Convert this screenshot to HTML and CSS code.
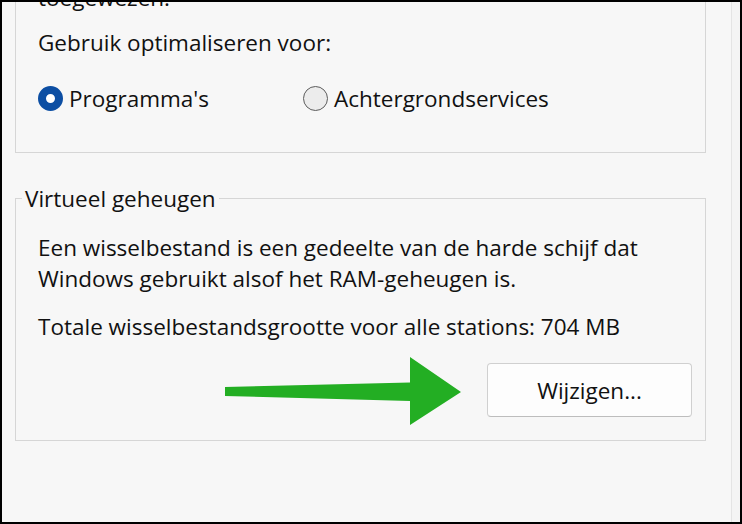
FILE: index.html
```html
<!DOCTYPE html>
<html lang="nl">
<head>
<meta charset="utf-8">
<title>Prestatieopties</title>
<link rel="stylesheet" href="styles.css">
</head>
<body>
<div class="frame">
  <section class="group group-top">
    <p class="line">toegewezen.</p>
    <p class="line label">Gebruik optimaliseren voor:</p>
    <div class="options">
      <label class="option">
        <span class="radio checked"></span>
        <span>Programma's</span>
      </label>
      <label class="option">
        <span class="radio"></span>
        <span>Achtergrondservices</span>
      </label>
    </div>
  </section>

  <fieldset class="group vm">
    <legend class="legend">Virtueel geheugen</legend>
    <div class="vm-body">
      <p class="line">Een wisselbestand is een gedeelte van de harde schijf dat<br>Windows gebruikt alsof het RAM-geheugen is.</p>
      <p class="line total">Totale wisselbestandsgrootte voor alle stations: 704 MB</p>
      <div class="actions">
        <button class="btn" type="button">Wijzigen...</button>
      </div>
    </div>
  </fieldset>

  <svg class="arrow" viewBox="0 0 742 524" width="742" height="524" aria-hidden="true">
    <polygon points="225,387 410,382.5 410,357 461,392 410,425 410,401 225,396" fill="#23ae23"/>
  </svg>
</div>
</body>
</html>
```

FILE: styles.css
```css
html, body {
  margin: 0;
  padding: 0;
}

body {
  font-family: "Open Sans", "Noto Sans", sans-serif;
  font-size: 22.5px;
  line-height: 31px;
  color: #111;
}

.frame {
  position: relative;
  width: 742px;
  height: 524px;
  box-sizing: border-box;
  border: 2px solid #000;
  background: #f7f7f7;
  overflow: hidden;
  padding-left: 13px;
  box-shadow: inset -8px 0 0 #f4f4f4, inset -9px 0 0 #e4e4e4;
}

.group {
  width: 691px;
  box-sizing: border-box;
  border: 1px solid #d6d6d6;
}

.line {
  margin: 0;
}

.group-top {
  margin-top: -31px;
  padding: 10px 13px 38px 22px;
}

.label {
  margin-top: 14px;
}

.options {
  margin-top: 25px;
  display: grid;
  grid-template-columns: 265px auto;
  align-items: center;
}

.option {
  display: flex;
  align-items: center;
  gap: 6px;
  height: 31px;
}

.radio {
  width: 25px;
  height: 25px;
  box-sizing: border-box;
  border-radius: 50%;
  border: 1.5px solid #5c5c5c;
  background: #ececec;
  flex: none;
}

.radio.checked {
  border: 8px solid #0c4ea3;
  background: #fff;
}

.vm {
  margin: 30px 0 0;
  padding: 0;
  min-inline-size: 0;
}

.legend {
  margin-left: 6px;
  padding: 0 3px;
}

.vm-body {
  padding: 18px 13px 23px 22px;
}

.total {
  margin-top: 17px;
}

.actions {
  margin-top: 21px;
  display: flex;
  justify-content: flex-end;
}

.btn {
  width: 205px;
  height: 54px;
  box-sizing: border-box;
  border: 1px solid #d0d0d0;
  border-bottom-color: #bdbdbd;
  border-radius: 4px;
  background: #fdfdfd;
  font: inherit;
  color: #111;
  padding: 0;
}

.arrow {
  position: absolute;
  top: -2px;
  left: -2px;
  pointer-events: none;
}
```
